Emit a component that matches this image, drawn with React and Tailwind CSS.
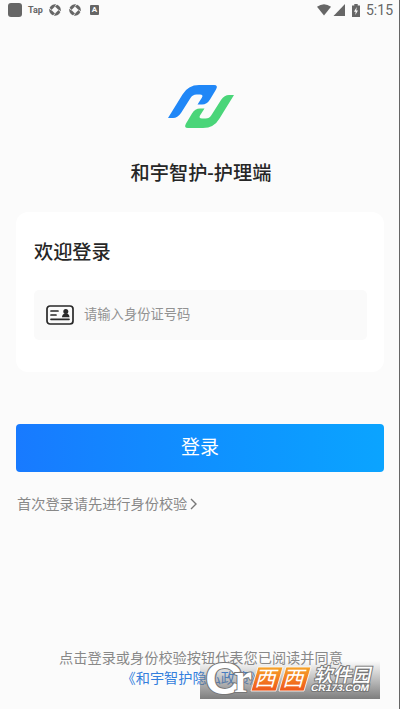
import { useState } from 'react';

export default function App() {
  return (
    <div className="w-[400px] h-[709px] overflow-hidden bg-[#fbfbfb] border-r border-[#666] flex flex-col font-['Roboto','Noto_Sans_CJK_SC',sans-serif]">
      <StatusBar />
      <Brand />
      <LoginForm />
      <Agreement />
    </div>
  );
}

function StatusBar() {
  return (
    <div className="h-5 shrink-0 flex items-center justify-between pl-2 pr-[6px] text-[#666]">
      <div className="flex items-center">
        <div className="w-[14px] h-[14px] rounded-[3px] bg-[#666]" />
        <span className="ml-[6px] w-[15px] text-[9px] leading-none font-bold">Tap</span>
        <SyncIcon className="ml-[6px]" />
        <SyncIcon className="ml-2" />
        <span className="ml-[9px] w-[9px] h-[10px] rounded-[1px] bg-[#666] text-[#fbfbfb] text-[8px] leading-[10px] font-bold text-center">
          A
        </span>
      </div>
      <div className="flex items-center">
        <svg width="29" height="12" viewBox="0 0 29 12" fill="#666">
          <path d="M0 2.8Q7 -2.2 14 2.8L7 11.5Z" />
          <path d="M28 0V12H16.500Z" />
        </svg>
        <svg width="8" height="13" viewBox="0 0 8 13" className="ml-[6px] mr-[6px]">
          <path d="M0 1.5H2.3V0H5.7V1.5H8V13H0Z" fill="#666" />
          <path d="M4.7 3L2 7.8H3.7L3.3 11L6 6.4H4.3Z" fill="#fbfbfb" />
        </svg>
        <span className="text-[14px] leading-5">5:15</span>
      </div>
    </div>
  );
}

function SyncIcon({ className }) {
  return (
    <svg width="12" height="12" viewBox="0 0 12 12" className={className}>
      <circle cx="6" cy="6" r="5.8" fill="#666" />
      <path d="M6 2.400L9.600 6L6 9.600L2.400 6Z" fill="#fbfbfb" />
      <path d="M6 2.400L8 0M9.600 6L12 8M6 9.600L4 12M2.400 6L0 4" stroke="#fbfbfb" strokeWidth="0.9" />
    </svg>
  );
}

function Brand() {
  return (
    <div className="flex flex-col items-center pt-[65px]">
      <svg width="67" height="44" viewBox="0 0 67 44" className="ml-[3px]">
        <path
          d="M0 33L14.500 9.500Q20 0 31 0H46Q50.500 0 48 4.500L42 14.500Q39 19.500 34 19.500H29.500L34 12.500Q35.500 9.500 32 9.500H28.500Q24.500 9.500 22.500 13L13 28Q9.500 33 5 33Z"
          fill="#2087f7"
        />
        <path
          d="M66 10L51.500 33.500Q46 43 35 43H20Q15.500 43 18 38.500L24 28.500Q27 23.500 32 23.500H36.500L32 30.500Q30.500 33.500 34 33.500H37.500Q41.500 33.500 43.500 30L53 15Q56.500 10 61 10Z"
          fill="#4ad579"
        />
      </svg>
      <h1 className="mt-[31px] ml-[3px] text-[19.2px] leading-7 font-medium text-[#262626]">和宇智护-护理端</h1>
    </div>
  );
}

function LoginForm() {
  const [idNumber, setIdNumber] = useState('');

  return (
    <form onSubmit={(e) => e.preventDefault()} className="mt-6 pl-4 pr-[15px]">
      <div className="h-[160px] rounded-[12px] bg-white pl-[18px] pr-[17px] pt-[27px]">
        <h2 className="text-[19.2px] leading-7 font-medium text-[#262626]">欢迎登录</h2>
        <label className="mt-[23px] h-[50px] rounded-[5px] bg-[#fafafa] flex items-center pl-3">
          <IdCardIcon />
          <input
            value={idNumber}
            onChange={(e) => setIdNumber(e.target.value)}
            placeholder="请输入身份证号码"
            className="ml-[10px] mb-px w-60 bg-transparent outline-none text-[13.3px] text-[#333] placeholder:text-[#929292]"
          />
        </label>
      </div>
      <button
        type="submit"
        className="mt-[52px] block w-full h-12 rounded-[4px] bg-linear-to-r from-[#187aff] to-[#0ba4ff] text-white text-[19px] leading-[48px]"
      >
        登录
      </button>
      <a href="#verify" className="mt-[22px] pl-px flex items-center text-[14.2px] leading-5 text-[#888]">
        首次登录请先进行身份校验
        <svg width="7" height="12" viewBox="0 0 7 12" className="ml-[3px] mb-px" fill="none" stroke="#777" strokeWidth="1.4">
          <path d="M1 1L6 6L1 11" />
        </svg>
      </a>
    </form>
  );
}

function IdCardIcon() {
  return (
    <svg width="28" height="20" viewBox="0 0 28 20" fill="none" stroke="#292929" strokeWidth="1.7">
      <rect x="1" y="1" width="26" height="18" rx="3" />
      <path d="M5 6H12M5 10H10M5 14.300H23" strokeLinecap="round" />
      <circle cx="19.800" cy="6.500" r="2.500" fill="#292929" stroke="none" />
      <path d="M16 12.200Q16 9 19.800 8.300Q23.500 9 23.500 12.200Z" fill="#292929" stroke="none" />
    </svg>
  );
}

function Agreement() {
  return (
    <div className="relative mt-auto h-[61px] shrink-0 text-[14.2px] leading-5 text-center text-[#888]">
      <p className="pl-[3px]">点击登录或身份校验按钮代表您已阅读并同意</p>
      <a href="#privacy" className="block pr-[22px] pl-2 text-[#347fdd]">
        《和宇智护隐私政策》
      </a>
      <SiteBadge />
    </div>
  );
}

function SiteBadge() {
  return (
    <svg width="180" height="38" viewBox="0 0 180 38" className="absolute left-[200px] top-[13px]">
      <defs>
        <linearGradient id="shade" x1="0" y1="0" x2="0" y2="1">
          <stop offset="0" stopColor="#777" stopOpacity="0" />
          <stop offset="1" stopColor="#777" stopOpacity="0.95" />
        </linearGradient>
        <linearGradient id="orange" x1="0" y1="0" x2="0" y2="1">
          <stop offset="0" stopColor="#f6a329" />
          <stop offset="1" stopColor="#ef561c" />
        </linearGradient>
      </defs>
      <rect width="180" height="38" fill="url(#shade)" />
      <g fill="#fff" stroke="#777" strokeWidth="2" paintOrder="stroke" fontWeight="bold">
        <text x="5" y="32.500" fontSize="44" textLength="37" lengthAdjust="spacingAndGlyphs" fontFamily="Liberation Sans, sans-serif">C</text>
        <text x="34" y="31" fontSize="43" textLength="18" lengthAdjust="spacingAndGlyphs" fontFamily="Liberation Serif, serif">r</text>
      </g>
      <g fill="url(#orange)" stroke="#fff" strokeWidth="0.8">
        <path d="M58 6H83L76 30H51Z" />
        <path d="M86 6H111L104 30H79Z" />
      </g>
      <g transform="skewX(-16)" fill="#fff" fontWeight="400" fontSize="21" fontFamily="Noto Sans CJK SC, sans-serif">
        <text x="61.500" y="25.500">西</text>
        <text x="89.500" y="25.500">西</text>
      </g>
      <g transform="skewX(-12)" fill="#fff" stroke="#777" strokeWidth="2" paintOrder="stroke">
        <text x="118" y="20.500" fontSize="19" fontWeight="500" fontFamily="Noto Sans CJK SC, sans-serif">软件园</text>
        <text x="117" y="30.500" fontSize="9.500" textLength="58" lengthAdjust="spacingAndGlyphs" fontWeight="bold" fontFamily="Liberation Sans, sans-serif">CR173.COM</text>
      </g>
    </svg>
  );
}
